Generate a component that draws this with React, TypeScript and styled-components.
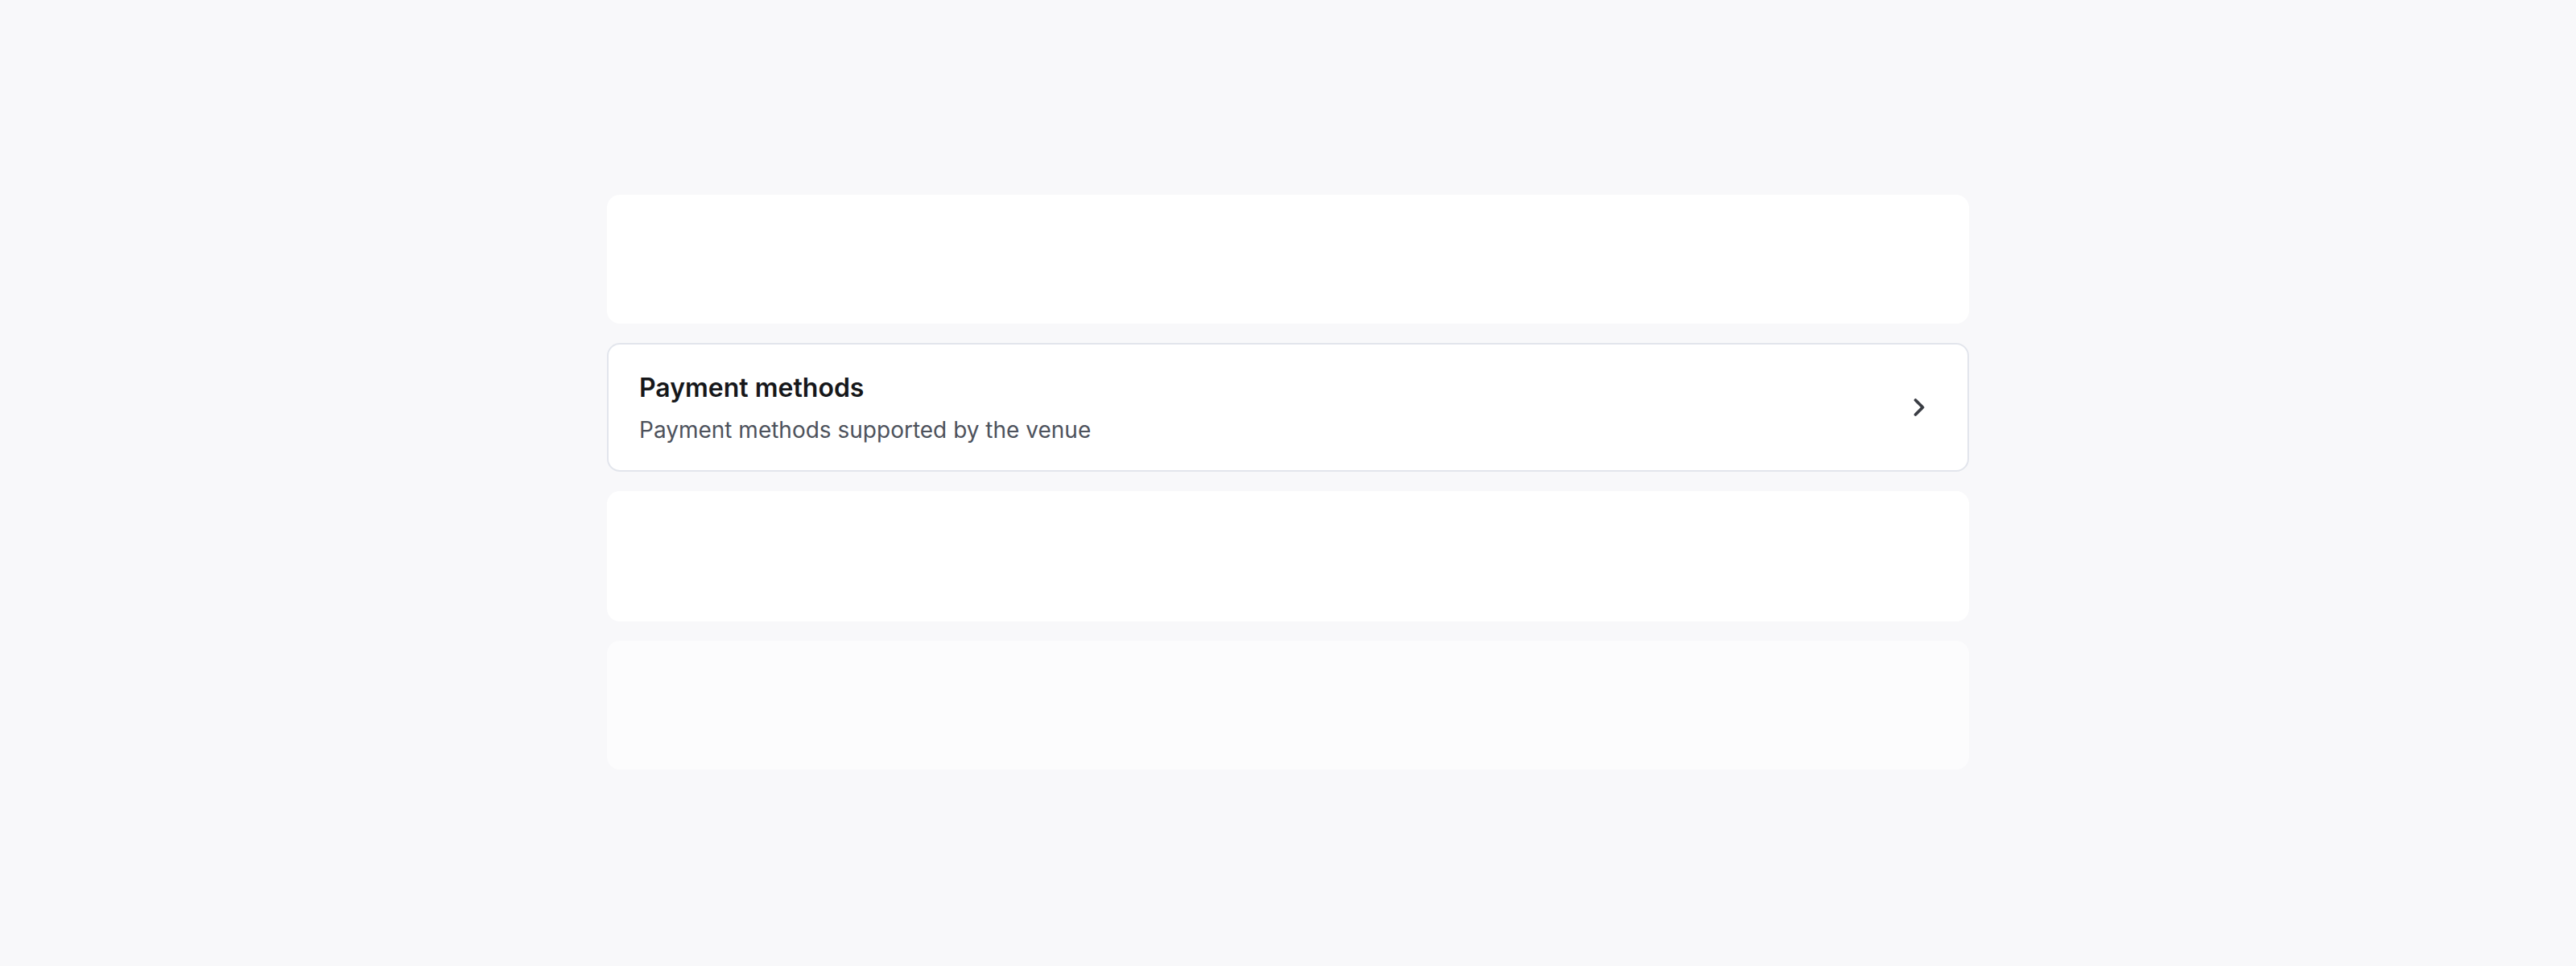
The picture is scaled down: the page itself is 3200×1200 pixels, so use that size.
import React from "react";
import styled, { createGlobalStyle } from "styled-components";
import { ChevronRight } from "lucide-react";

type Setting = {
    id: string,
    title?: string,
    description?: string,
    height?: number,
    faded?: boolean,
};

const settings: Setting[] = [
    { id: "general" },
    { id: "payments", title: "Payment methods", description: "Payment methods supported by the venue" },
    { id: "hours", height: 162 },
    { id: "extra", faded: true },
];

const App: React.FC = () => {
    return (
        <>
            <GlobalStyle />
            <Page>
                <SettingsList>
                    {settings.map((item) =>
                        item.title ? (
                            <SettingCard key={item.id} $bordered>
                                <CardText>
                                    <CardTitle>{item.title}</CardTitle>
                                    <CardDescription>{item.description}</CardDescription>
                                </CardText>
                                <Chevron>
                                    <ChevronRight size={36} strokeWidth={2.5} />
                                </Chevron>
                            </SettingCard>
                        ) : (
                            <SettingCard key={item.id} $height={item.height} $faded={item.faded} />
                        )
                    )}
                </SettingsList>
            </Page>
        </>
    );
};

export default App;


const GlobalStyle = createGlobalStyle`
    html, body {
        margin: 0;
        padding: 0;
        background: #f8f8fa;
        font-family: Inter, "Noto Sans", "Liberation Sans", sans-serif;
    }
`;

const Page = styled.main`
    min-height: 1200px;
    box-sizing: border-box;
    padding: 242px 0 0;
    display: flex;
    justify-content: center;
`;

const SettingsList = styled.div`
    width: 1692px;
    display: flex;
    flex-direction: column;
    gap: 24px;
`;

const SettingCard = styled.div<{ $bordered?: boolean, $faded?: boolean, $height?: number }>`
    height: ${(p) => p.$height ?? 160}px;
    box-sizing: border-box;
    display: flex;
    align-items: center;
    justify-content: space-between;
    padding: 0 42px 0 38px;
    border-radius: 16px;
    background: ${(p) => (p.$faded ? "#fcfcfd" : "#ffffff")};
    border: 2px solid ${(p) => (p.$bordered ? "#e2e5ec" : "transparent")};
`;

const CardText = styled.div`
    display: flex;
    flex-direction: column;
    gap: 12px;
    padding-top: 4px;
`;

const CardTitle = styled.div`
    font-size: 32px;
    line-height: 40px;
    font-weight: 600;
    color: #16171a;
`;

const CardDescription = styled.div`
    font-size: 28px;
    line-height: 40px;
    font-weight: 400;
    color: #4d525c;
`;

const Chevron = styled.div`
    display: flex;
    color: #3a3d44;
`;
